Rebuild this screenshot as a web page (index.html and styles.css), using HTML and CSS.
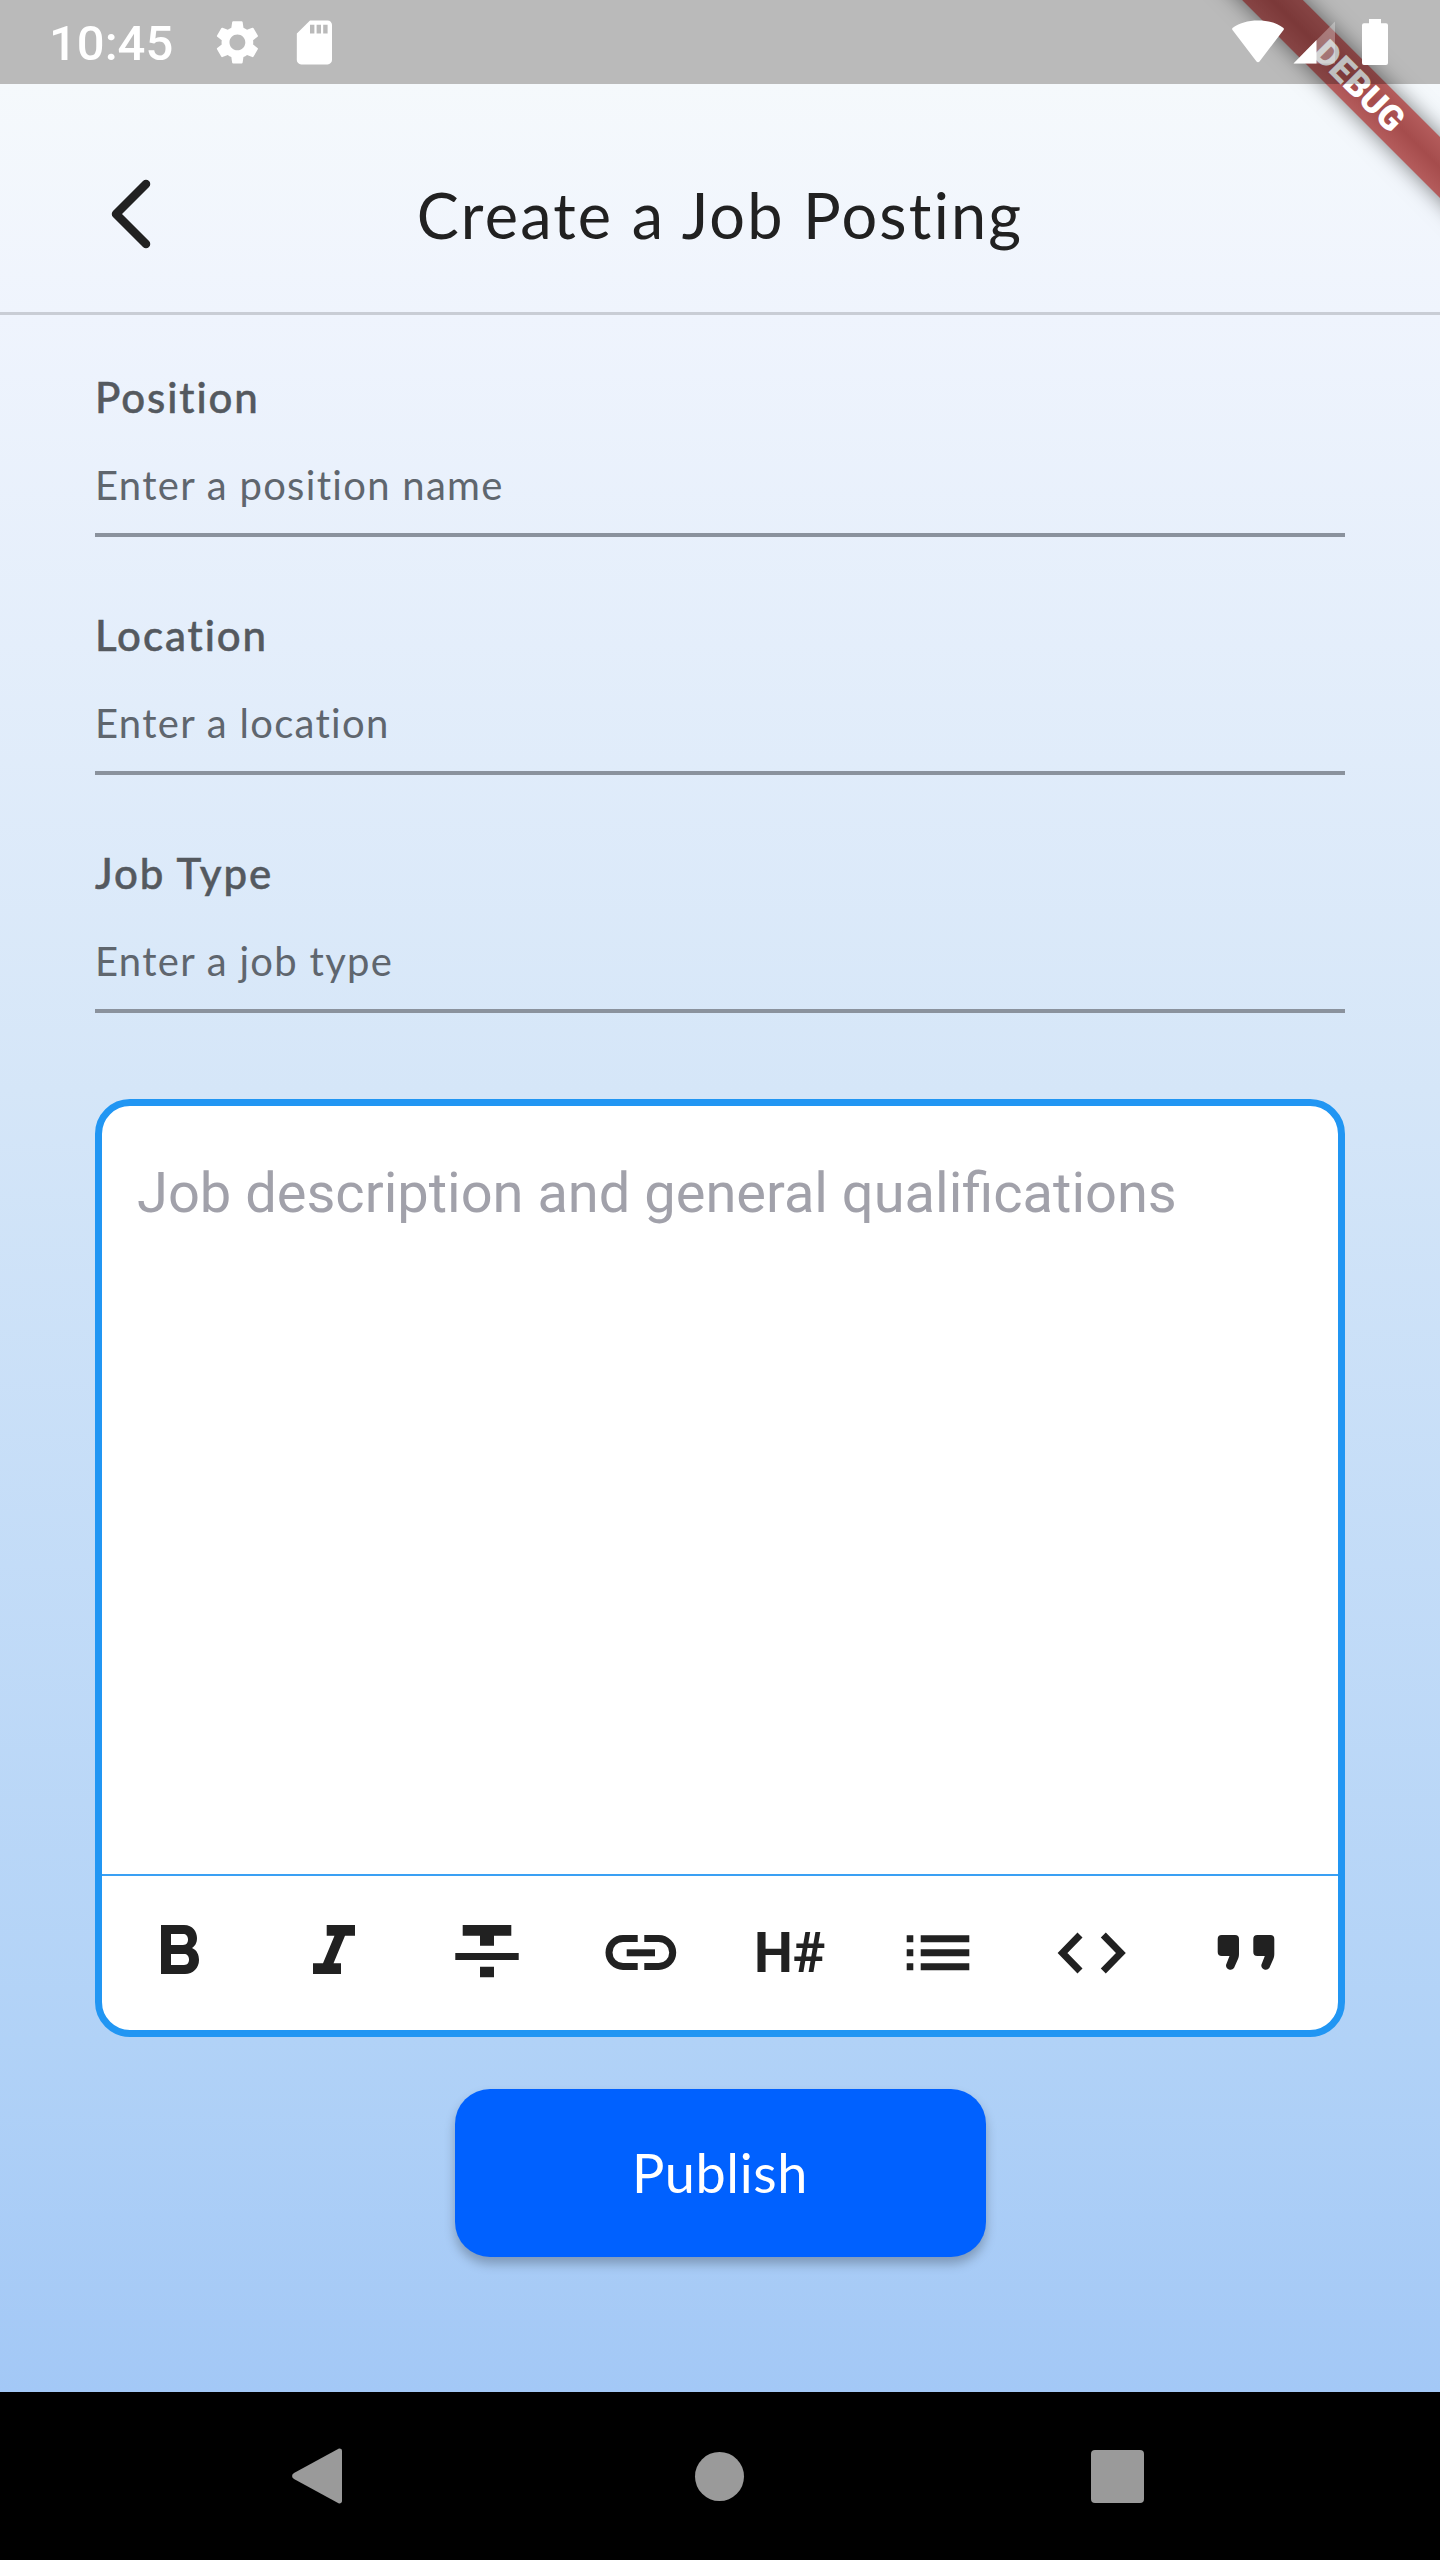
FILE: index.html
```html
<!DOCTYPE html>
<html lang="en">
<head>
<meta charset="utf-8">
<title>Create a Job Posting</title>
<link rel="stylesheet" href="styles.css">
</head>
<body>
<div class="screen">
  <div class="banner"><span>DEBUG</span></div>
  <header class="statusbar">
    <span class="time">10:45</span>
    <svg class="st-gear" viewBox="0 0 24 24"><path d="M19.14 12.94c.04-.3.06-.61.06-.94 0-.32-.02-.64-.07-.94l2.03-1.58c.18-.14.23-.41.12-.61l-1.92-3.32c-.12-.22-.37-.29-.59-.22l-2.39.96c-.5-.38-1.03-.7-1.62-.94l-.36-2.54c-.04-.24-.24-.41-.48-.41h-3.84c-.24 0-.43.17-.47.41l-.36 2.54c-.59.24-1.13.57-1.62.94l-2.39-.96c-.22-.08-.47 0-.59.22L2.74 8.87c-.12.21-.08.47.12.61l2.03 1.58c-.05.3-.09.63-.09.94s.02.64.07.94l-2.03 1.58c-.18.14-.23.41-.12.61l1.92 3.32c.12.22.37.29.59.22l2.39-.96c.5.38 1.03.7 1.62.94l.36 2.54c.05.24.24.41.48.41h3.84c.24 0 .44-.17.47-.41l.36-2.54c.59-.24 1.13-.56 1.62-.94l2.39.96c.22.08.47 0 .59-.22l1.92-3.32c.12-.22.07-.47-.12-.61l-2.01-1.58zM12 15.6c-1.98 0-3.6-1.62-3.6-3.6s1.62-3.6 3.6-3.6 3.6 1.62 3.6 3.6-1.62 3.6-3.6 3.6z"/></svg>
    <svg class="st-sd" viewBox="0 0 24 24"><path d="M18 2h-8L4.02 8 4 20c0 1.1.9 2 2 2h12c1.100 0 2-.9 2-2V4c0-1.100-.9-2-2-2zm-6 6h-2V4h2v4zm3 0h-2V4h2v4zm3 0h-2V4h2v4z"/></svg>
    <svg class="st-wifi" viewBox="0 0 54 44"><path d="M1.500 8C8 3 17 .5 27 .5S46 3 52.500 8c.5.6.5 1.500 0 2L28.500 41.500c-.8 1-2.200 1-3 0L1.500 10c-.5-.5-.5-1.400 0-2z"/></svg>
    <svg class="st-signal" viewBox="0 0 42 43"><path class="st-signal-dim" d="M42 .5V42.500H.5z"/><path d="M23.500 19V42.500H.5z"/></svg>
    <svg class="st-battery" viewBox="0 0 26 46"><path d="M7 0h12v4.300h5a2 2 0 0 1 2 2V44a2 2 0 0 1-2 2H2a2 2 0 0 1-2-2V6.300a2 2 0 0 1 2-2h5z"/></svg>
  </header>

  <div class="appbar">
    <svg class="back" viewBox="0 0 50 74"><path d="M38 7L8 37l30 30"/></svg>
    <h1 class="title">Create a Job Posting</h1>
  </div>

  <main class="content">
    <section class="fields">
      <div class="field">
        <div class="field-label">Position</div>
        <div class="field-input">Enter a position name</div>
      </div>
      <div class="field">
        <div class="field-label">Location</div>
        <div class="field-input">Enter a location</div>
      </div>
      <div class="field">
        <div class="field-label">Job Type</div>
        <div class="field-input">Enter a job type</div>
      </div>
    </section>

    <section class="editor">
      <div class="editor-text">Job description and general qualifications</div>
      <div class="toolbar">
        <div class="tool"><svg class="icon" viewBox="0 0 84 84"><path fill-rule="evenodd" d="M23 14H46C55 14 59 21 59 27 59 32 57 35 54 37 59 39 61 44 61 49 61 57 55 63 47 63H23ZM33 23V34H45C49 34 50 31 50 28.500 50 25 48 23 45 23ZM33 43V54H46C50 54 51 51 51 48.500 51 45 49 43 46 43Z"/></svg></div>
        <div class="tool"><svg class="icon" viewBox="0 0 84 84"><path d="M34.700 14H63V24.700H53L41.500 52.300H49V63H21V52.300H31L42.500 24.700H34.700Z"/></svg></div>
        <div class="tool"><svg class="icon" viewBox="0 0 84 84"><path d="M17.700 14H66.300V24.700H49V34.700H35V24.700H17.700ZM10.300 42H73.700V49H10.300ZM35 55.700H49V66.300H35Z"/></svg></div>
        <div class="tool"><svg class="icon" viewBox="0 0 84 84"><path class="stroke" d="M38.700 27.500H24A14 14 0 0 0 24 55.500H38.700M45.300 27.500H59.700A14 14 0 0 1 59.700 55.500H45.300"/><path d="M27.700 38.300H56V45.300H27.700Z"/></svg></div>
        <div class="tool tool-text">H#</div>
        <div class="tool"><svg class="icon" viewBox="0 0 84 84"><path d="M10.700 24.300H17.300V31.300H10.700ZM24.700 24.300H73.300V31.300H24.700ZM10.700 38.300H17.300V45.300H10.700ZM24.700 38.300H73.300V45.300H24.700ZM10.700 52.300H17.300V59.300H10.700ZM24.700 52.300H73.300V59.300H24.700Z"/></svg></div>
        <div class="tool"><svg class="icon" viewBox="0 0 84 84"><path class="stroke" d="M30 24L12.500 42 30 60M53.300 24L70.900 42 53.300 60"/></svg></div>
        <div class="tool"><svg class="icon" viewBox="0 0 84 84"><path d="M17.700 24H31a4 4 0 0 1 4 4V43C35 45 34.500 47 34 48L30 57a4.500 4.500 0 0 1-8-3L25.500 45H17.700a4 4 0 0 1-4-4V28a4 4 0 0 1 4-4Z"/><path d="M53.300 24H66.300a4 4 0 0 1 4 4V43C70.300 45 69.800 47 69.300 48L65.300 57a4.500 4.500 0 0 1-8-3L60.800 45H53.300a4 4 0 0 1-4-4V28a4 4 0 0 1 4-4Z"/></svg></div>
      </div>
    </section>

    <button class="publish" type="button">Publish</button>
  </main>

  <footer class="navbar">
    <svg class="nav-back" viewBox="0 0 50 56"><path d="M46.500.8C48 .2 50 1 50 3V53C50 55 48 55.800 46.500 55.200L2 31C-.5 29.500-.5 26.500 2 25Z"/></svg>
    <span class="nav-home"></span>
    <span class="nav-recent"></span>
  </footer>
</div>
</body>
</html>
```

FILE: styles.css
```css
* { box-sizing: border-box; }
html, body { margin: 0; padding: 0; }
.screen {
  position: relative;
  width: 1440px;
  height: 2560px;
  overflow: hidden;
  display: flex;
  flex-direction: column;
  background: linear-gradient(180deg, #f8f8f8 0, #f8f8f8 84px, #f5f9fc 84px, #eff4fd 315px, #d5e6f8 1090px, #b1d2f7 2040px, #a3c8f6 2392px);
}

/* debug ribbon */
.banner {
  position: absolute;
  z-index: 1;
  left: 1158.750px;
  top: 64.750px;
  width: 400px;
  height: 43px;
  transform: rotate(45deg);
  display: flex;
  align-items: center;
  justify-content: center;
  background: linear-gradient(180deg, #b45c5c 0, #a54c4c 50%, #b45c5c 100%);
  box-shadow: 0 0 21px rgba(0, 0, 0, .5);
  font: 900 35px/42px Roboto, sans-serif;
  color: #fff;
}

/* status bar */
.statusbar {
  position: relative;
  z-index: 2;
  flex: none;
  height: 84px;
  display: flex;
  align-items: flex-start;
  background: rgba(0, 0, 0, .25);
  fill: #fff;
}
.time {
  margin: 15px 0 0 49px;
  width: 162px;
  font: 500 49px/58px Roboto, sans-serif;
  color: #fff;
}
.st-gear { width: 52.800px; height: 52.800px; margin-top: 15.600px; }
.st-sd { width: 52.800px; height: 52.800px; margin: 15.600px 0 0 24.200px; }
.st-wifi { width: 54px; height: 44px; margin: 19.500px 0 0 890px; }
.st-signal { width: 42px; height: 43px; margin: 21px 0 0 8.500px; }
.st-signal-dim { opacity: .3; }
.st-battery { width: 26px; height: 46px; margin: 19px 0 0 27px; }

/* app bar */
.appbar {
  flex: none;
  height: 231px;
  padding: 34px 0 0 108px;
  border-bottom: 3px solid #c9cdd5;
  display: grid;
  grid-template-columns: 1fr auto 1fr;
  align-items: center;
}
.back {
  width: 50px;
  height: 74px;
  fill: none;
  stroke: #212121;
  stroke-width: 8.500px;
  stroke-linecap: round;
  stroke-linejoin: round;
  margin-top: -2px;
}
.title {
  margin: 0 108px 0 0;
  grid-column: 2;
  font: 400 63px/80px Lato, sans-serif;
  letter-spacing: 2.200px;
  color: #212121;
  white-space: nowrap;
}

/* form */
.content {
  flex: 1;
  padding: 55px 95px 0;
  display: flex;
  flex-direction: column;
}
.fields {
  display: flex;
  flex-direction: column;
  gap: 71px;
}
.field-label {
  margin-top: 1.500px;
  font: 500 42px/50px Lato, sans-serif;
  letter-spacing: 1.900px;
  -webkit-text-stroke: .5px #54595f;
  color: #54595f;
}
.field-input {
  margin-top: 38px;
  padding: 0 0 23.500px;
  border-bottom: 4px solid #8a929d;
  font: 400 40px/50px Lato, sans-serif;
  letter-spacing: 1.300px;
  color: #5f666e;
}

/* editor */
.editor {
  flex: none;
  height: 938px;
  margin-top: 86px;
  display: flex;
  flex-direction: column;
  background: #fff;
  border: 7px solid #2196f3;
  border-radius: 35px;
}
.editor-text {
  flex: 1;
  padding: 54px 0 0 35px;
  border-bottom: 2px solid #3aa0f4;
  font: 400 56px/66px Roboto, sans-serif;
  color: #a1a1aa;
}
.toolbar {
  flex: none;
  height: 154px;
  padding-left: 1px;
  display: flex;
  align-items: center;
}
.tool {
  flex: none;
  width: 153.800px;
  display: flex;
  justify-content: center;
  align-items: center;
  fill: #212121;
}
.icon { width: 84px; height: 84px; display: block; }
.stroke { fill: none; stroke: #212121; stroke-width: 7px; }
.tool-text {
  width: 143px;
  height: 84px;
  font: 700 55px/84px Roboto, sans-serif;
  color: #212121;
}

/* button */
.publish {
  align-self: center;
  flex: none;
  width: 531px;
  height: 168px;
  margin-top: 52px;
  border: 0;
  border-radius: 35px;
  background: #0061ff;
  box-shadow: 0 7px 11px rgba(0, 0, 0, .25);
  font: 400 54px/60px Lato, sans-serif;
  letter-spacing: .6px;
  color: #fff;
}

/* navigation bar */
.navbar {
  flex: none;
  height: 168px;
  background: #000;
  display: flex;
  align-items: center;
  padding-left: 292px;
}
.nav-back { width: 50px; height: 56px; fill: #9a9a9a; }
.nav-home {
  width: 49px;
  height: 49px;
  margin-left: 353px;
  border-radius: 50%;
  background: #9a9a9a;
}
.nav-recent {
  width: 53px;
  height: 53px;
  margin-left: 347px;
  border-radius: 4px;
  background: #9a9a9a;
}
```
